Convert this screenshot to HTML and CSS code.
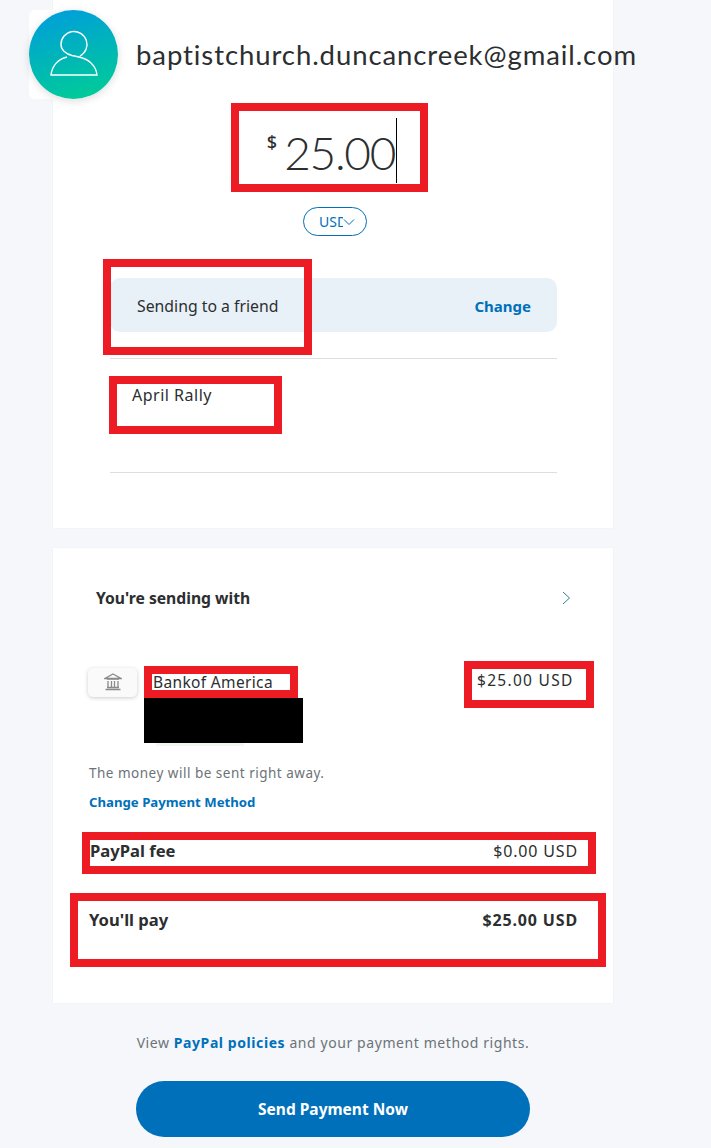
FILE: index.html
```html
<!DOCTYPE html>
<html lang="en">
	<head>
		<title>Send Payment</title>
		<meta charset="utf-8" name="viewport" content="width=device-width, initial-scale=1">
		<link rel="stylesheet" href="styles.css">
	</head>
	<body>
		<div class="page">
			<div class="card card-top">
				<div class="payee">
					<div class="avatar-back">
						<div class="avatar">
							<svg width="89" height="89" viewBox="0 0 89 89" fill="none" stroke="#fff" stroke-width="1.400">
								<path d="M38 47 C29 49 23 56 22 65 H68 C67 55 59 49 50 47 L43 45.500 C37 44 32 40 32 34.500 A13 13 0 1 1 51 46"/>
							</svg>
						</div>
					</div>
					<span class="email">baptistchurch.duncancreek@gmail.com</span>
				</div>
				<div class="amount">
					<span class="currency">$</span>
					<span class="value">25.00</span>
					<span class="caret"></span>
				</div>
				<div class="code-wrap">
					<div class="code">
						<span class="code-text">USD</span>
						<svg width="12" height="8" viewBox="0 0 12 8" fill="none" stroke="#0070ba" stroke-width="1"><path d="M1 1.500 L6 6.500 L11 1.500"/></svg>
					</div>
				</div>
				<div class="friend">
					<span>Sending to a friend</span>
					<a class="change">Change</a>
				</div>
				<div class="note">April Rally</div>
			</div>

			<div class="card card-bottom">
				<div class="with">
					<span>You're sending with</span>
					<svg width="9" height="14" viewBox="0 0 9 14" fill="none" stroke="#2c7f8f" stroke-width="1"><path d="M1 1 L7.500 7 L1 13"/></svg>
				</div>
				<div class="bank">
					<div class="bank-tile">
						<svg width="18" height="18" viewBox="0 0 18 18" fill="none" stroke="#8a8a8a" stroke-width="1.300"><path d="M9 1 L17 5.500 H1 Z"/><path d="M3 6 H15 M4 8 V14 M7.500 8 V14 M10.500 8 V14 M14 8 V14 M3 14.500 H15 M1.500 16.500 H16.500"/></svg>
					</div>
					<span class="bank-name">Bankof America</span>
					<span class="bank-amount">$25.00 USD</span>
				</div>
				<p class="right-away">The money will be sent right away.</p>
				<a class="method">Change Payment Method</a>
				<div class="line fee">
					<strong>PayPal fee</strong>
					<span>$0.00 USD</span>
				</div>
				<div class="line total">
					<strong>You'll pay</strong>
					<strong>$25.00 USD</strong>
				</div>
			</div>

			<p class="policies">View <a>PayPal policies</a> and your payment method rights.</p>
			<div class="send">Send Payment Now</div>

			<!-- red boxes somebody drew over the screenshot -->
			<div class="mark mark-amount"></div>
			<div class="mark mark-friend"></div>
			<div class="mark mark-note"></div>
			<div class="mark mark-bank"></div>
			<div class="mark mark-paid"></div>
			<div class="mark mark-fee"></div>
			<div class="mark mark-total"></div>
			<div class="blackout"></div>
			<div class="sliver"></div>
		</div>
	</body>
</html>
```

FILE: styles.css
```css
* {box-sizing: border-box}

html, body {
	margin: 0;
	background-color: #f5f7fa;
	font-family: "Noto Sans", Arial, sans-serif;
	color: #2c2e2f;
}

.page {
	position: relative;
	width: 711px;
	height: 1148px;
	overflow: hidden;
	padding-left: 53px;
}

/* Cards */
.card {
	width: 560px;
	background-color: white;
	box-shadow: 0 0 1px #e6e8ee;
}
.card-top {
	height: 528px;
	padding-top: 10px;
}
.card-bottom {
	height: 455px;
	margin-top: 20px;
	padding-top: 36px;
}

/* Payee header */
.payee {
	display: flex;
	align-items: center;
	margin-left: -24px;
	height: 89px;
}
.avatar-back {
	width: 89px;
	height: 89px;
	background-color: white;
	border-radius: 6px;
	flex-shrink: 0;
}
.avatar {
	width: 89px;
	height: 89px;
	border-radius: 50%;
	background: linear-gradient(165deg, #009cde 0%, #00cf92 100%);
	box-shadow: 0 2px 8px rgba(0, 0, 0, 0.14);
}
.avatar svg {
	display: block;
}
.email {
	margin-left: 18px;
	font-family: "Lato", sans-serif;
	font-size: 27.500px;
	letter-spacing: 0.92px;
	white-space: nowrap;
}

/* Amount */
.amount {
	display: flex;
	justify-content: center;
	height: 65px;
	margin-top: 19px;
	padding-right: 2px;
}
.currency {
	font-size: 18px;
	line-height: 20px;
	margin-top: 14px;
	margin-right: 7px;
	font-weight: 500;
}
.value {
	font-family: "Lato", sans-serif;
	font-weight: 300;
	font-size: 46px;
	line-height: 70px;
	letter-spacing: -1.300px;
}
.caret {
	width: 1px;
	height: 65px;
	margin-left: 1px;
	background-color: black;
}
.code-wrap {
	display: flex;
	justify-content: center;
	margin-top: 24px;
	padding-left: 4px;
}
.code {
	display: flex;
	align-items: center;
	width: 64px;
	height: 29px;
	padding-left: 15px;
	border: 1px solid #0070ba;
	border-radius: 15px;
	color: #0070ba;
	font-size: 14px;
}
.code-text {
	width: 24px;
	overflow: hidden;
}

/* Recipient type and note */
.friend {
	display: flex;
	justify-content: space-between;
	align-items: center;
	width: 447px;
	height: 54px;
	margin: 42px 0 0 57px;
	padding: 2px 26px 0 27px;
	background-color: #e9f1f8;
	border-radius: 10px;
	font-size: 15.800px;
}
.change {
	color: #0070ba;
	font-weight: 700;
	font-size: 15px;
}
.note {
	width: 447px;
	height: 115px;
	margin: 26px 0 0 57px;
	padding: 25px 0 0 22px;
	border-top: 1px solid #dedede;
	border-bottom: 1px solid #dedede;
	font-size: 16px;
	line-height: 22px;
	letter-spacing: 0.5px;
}

/* Funding section */
.with {
	display: flex;
	justify-content: space-between;
	align-items: center;
	width: 475px;
	height: 28px;
	margin-left: 43px;
	font-weight: 700;
	font-size: 15.700px;
}
.bank {
	display: flex;
	align-items: center;
	height: 30px;
	margin: 55px 0 0 35px;
	font-size: 15.500px;
}
.bank-tile {
	display: flex;
	align-items: center;
	justify-content: center;
	width: 49px;
	height: 29px;
	background-color: #fafafa;
	border-radius: 5px;
	box-shadow: 0 1px 4px rgba(0, 0, 0, 0.2);
}
.bank-name {
	margin-left: 16px;
	width: 324px;
	letter-spacing: 0.35px;
}
.bank-amount {
	margin-top: -5px;
	letter-spacing: 1.300px;
}
.right-away {
	margin: 66px 0 0 36px;
	color: #6c7378;
	font-size: 13.500px;
	line-height: 20px;
	letter-spacing: 0.5px;
}
.method {
	display: block;
	margin: 9px 0 0 36px;
	color: #0070ba;
	font-weight: 700;
	font-size: 13.200px;
	line-height: 20px;
}
.line {
	display: flex;
	justify-content: space-between;
	width: 489px;
	margin-left: 36px;
	font-size: 16px;
	line-height: 24px;
	letter-spacing: 0.85px;
}
.line strong:first-child {
	letter-spacing: 0;
	font-size: 16.600px;
}
.fee {
	margin-top: 27px;
	padding-left: 1px;
}
.total {
	margin-top: 45px;
}

/* Footer */
.policies {
	width: 560px;
	margin: 30px 0 0;
	text-align: center;
	color: #6c7378;
	font-size: 14px;
	line-height: 20px;
	letter-spacing: 0.58px;
}
.policies a {
	color: #0070ba;
	font-weight: 700;
}
.send {
	width: 394px;
	height: 56px;
	margin: 28px 0 0 83px;
	background-color: #0070ba;
	border-radius: 28px;
	color: white;
	font-weight: 700;
	font-size: 15.500px;
	line-height: 56px;
	text-align: center;
}

/* Annotations over the screenshot */
.mark {
	position: absolute;
	border: 8px solid #ed1c24;
}
.mark-amount {
	left: 231px;
	top: 103px;
	width: 197px;
	height: 89px;
}
.mark-friend {
	left: 103px;
	top: 259px;
	width: 209px;
	height: 96px;
}
.mark-note {
	left: 109px;
	top: 376px;
	width: 173px;
	height: 58px;
}
.mark-bank {
	left: 144px;
	top: 666px;
	width: 154px;
	height: 32px;
}
.mark-paid {
	left: 464px;
	top: 661px;
	width: 130px;
	height: 47px;
}
.mark-fee {
	left: 82px;
	top: 832px;
	width: 514px;
	height: 42px;
}
.mark-total {
	left: 70px;
	top: 893px;
	width: 536px;
	height: 74px;
}
.blackout {
	position: absolute;
	left: 144px;
	top: 698px;
	width: 159px;
	height: 45px;
	background-color: black;
}
.sliver {
	position: absolute;
	left: 156px;
	top: 743px;
	width: 88px;
	height: 3px;
	background-color: #eff9ef;
}
```
